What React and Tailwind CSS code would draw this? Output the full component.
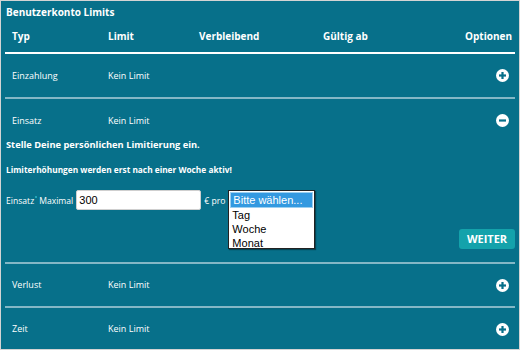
import React from "react";

const Plus = () => (
  <svg width="13" height="13" viewBox="0 0 13 13">
    <circle cx="6.5" cy="6.5" r="6.5" fill="#fff" />
    <rect x="3" y="5.4" width="7" height="2.2" fill="#07708a" />
    <rect x="5.4" y="3" width="2.2" height="7" fill="#07708a" />
  </svg>
);
const Minus = () => (
  <svg width="13" height="13" viewBox="0 0 13 13">
    <circle cx="6.5" cy="6.5" r="6.5" fill="#fff" />
    <rect x="3" y="5.4" width="7" height="2.2" fill="#07708a" />
  </svg>
);

const Row = ({ typ, icon, h = "h-[43px]" }) => (
  <div className={`flex items-center ${h} pl-[7px] pr-[6px] text-[9px] text-white`}>
    <div className="w-[96px]">{typ}</div>
    <div className="w-[91px]">Kein Limit</div>
    <div className="flex-1" />
    {icon === "minus" ? <Minus /> : <Plus />}
  </div>
);

const Line = () => <div className="h-[2px] bg-[#84b7c6]" />;

export default function App() {
  return (
    <div
      className="w-[520px] h-[350px] overflow-hidden border border-[#d4d4d4] bg-[#07708a] px-[4px] text-white"
      style={{ fontFamily: '"Open Sans", "Noto Sans", sans-serif' }}
    >
      <div className="pt-[3px] pl-[1px] text-[10px] font-bold leading-[17px]">Benutzerkonto Limits</div>
      <div className="flex items-center h-[31px] pl-[7px] pr-[3px] text-[10px] font-bold">
        <div className="w-[96px]">Typ</div>
        <div className="w-[91px]">Limit</div>
        <div className="w-[124px]">Verbleibend</div>
        <div className="flex-1">Gültig ab</div>
        <div>Optionen</div>
      </div>
      <div className="h-[2px] bg-white" />
      <Row typ="Einzahlung" h="h-[43px]" />
      <Line />
      <Row typ="Einsatz" icon="minus" h="h-[43px]" />
      <div className="pl-[1px] -mt-[4px] text-[9.3px] font-bold leading-[14px]">
        Stelle Deine persönlichen Limitierung ein.
      </div>
      <div className="pl-[1px] mt-[12px] text-[8.3px] font-bold leading-[12px]">
        Limiterhöhungen werden erst nach einer Woche aktiv!
      </div>
      <div className="relative mt-[14px] flex items-start h-[72px] text-[8.6px] pl-[1px]">
        <div className="mt-[5px] relative">
          Einsatz
          <span className="absolute -right-[3px] top-[1px] w-[2px] h-[2px] rounded-full bg-[#2bb7c4]" />
        </div>
        <div className="ml-[5px] mt-[5px]">Maximal</div>
        <div
          className="ml-[3px] w-[125px] h-[20px] bg-white rounded-[2px] border border-[#cfcfcf] text-black text-[11px] leading-[18px] pl-[2px]"
          style={{ fontFamily: '"Liberation Sans", Arial, sans-serif' }}
        >
          300
        </div>
        <div className="ml-[3px] mt-[5px]">€ pro</div>
        <div
          className="ml-[3px] w-[87px] h-[59px] bg-white border border-[#222] shadow-[1px_1px_1px_rgba(0,0,0,0.4)] text-black text-[11px] leading-[14px] pt-[1px]"
          style={{ fontFamily: '"Liberation Sans", Arial, sans-serif' }}
        >
          <div className="bg-[#3399e0] text-white pl-[2px] mx-[1px] border border-[#9ccff0]">Bitte wählen...</div>
          <div className="pl-[3px]">Tag</div>
          <div className="pl-[3px]">Woche</div>
          <div className="pl-[3px]">Monat</div>
        </div>
        <div className="flex-1" />
        <div className="self-end mb-[13px] h-[20px] w-[56px] rounded-[3px] bg-[#14a2ab] flex items-center justify-center text-[11px] font-bold">
          WEITER
        </div>
      </div>
      <Line />
      <Row typ="Verlust" h="h-[42px]" />
      <Line />
      <Row typ="Zeit" h="h-[42px]" />
    </div>
  );
}
